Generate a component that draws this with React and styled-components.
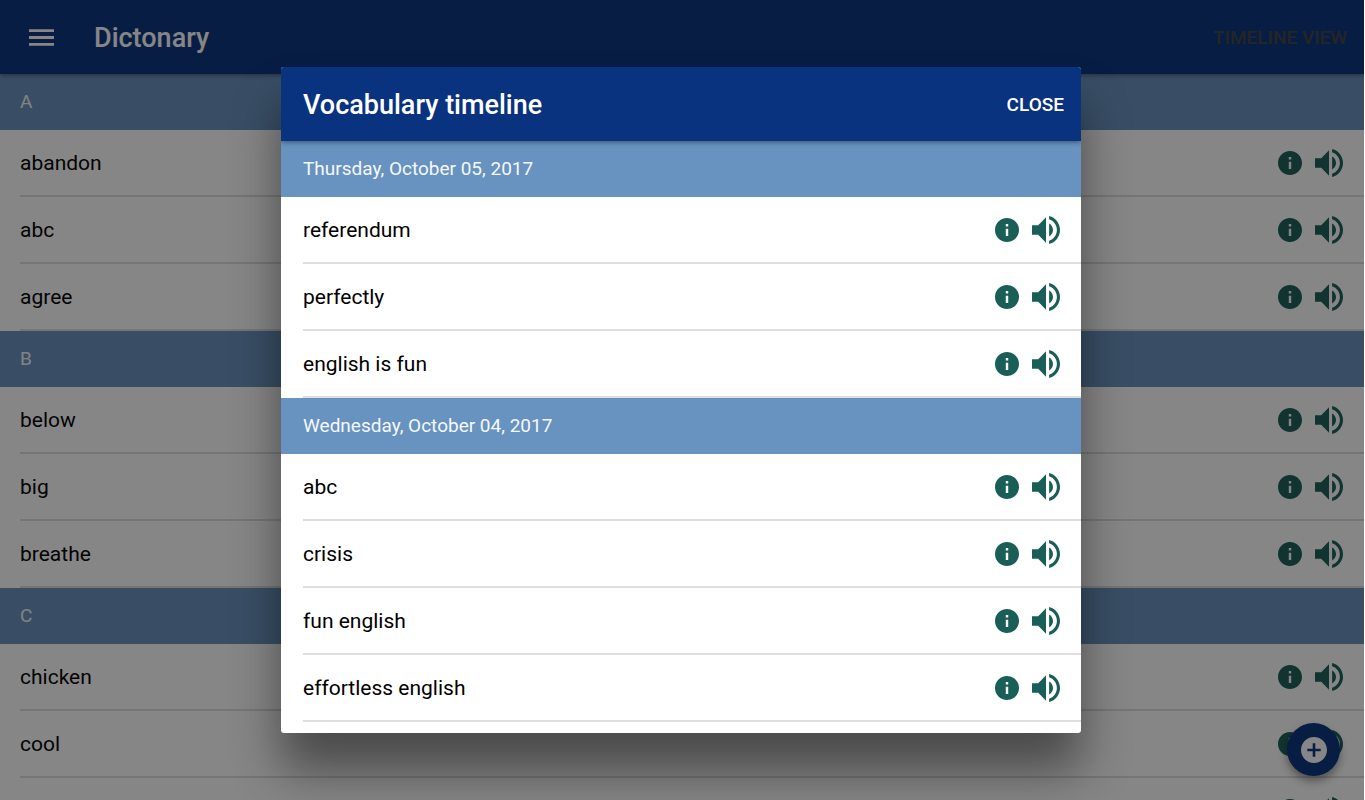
import React from "react";
import styled, { createGlobalStyle } from "styled-components";

const GlobalStyle = createGlobalStyle`
  *, *::before, *::after { box-sizing: border-box; }
  html, body, #root { height: 100%; }
  body { margin: 0; background: #fff; overflow: hidden; font-family: Roboto, "Liberation Sans", sans-serif; color: #000; }
  button { font: inherit; border: 0; padding: 0; background: none; cursor: pointer; }
  h1, h2, h3, ul { margin: 0; padding: 0; font-weight: 400; }
  svg { display: block; fill: currentColor; }
`;

const Shell = styled.div`
  --inset: 20px;
  position: relative;
  height: 100%;
  margin-right: 1px;
  overflow: hidden;
`;

const Toolbar = styled.header`
  position: relative;
  display: flex;
  align-items: center;
  height: 74px;
  padding: 1px 17px 0 ${(p) => (p.$menu ? "29px" : "var(--inset)")};
  background: #09327f;
  color: #fff;
  box-shadow: 0 1px 5px rgba(0, 0, 0, 0.45);
`;

const MenuButton = styled.button`
  color: inherit;
  margin-right: 40px;
`;

const Title = styled.h1`
  flex: 1;
  font-size: 27px;
  line-height: 32px;
  font-weight: 500;
`;

const TextButton = styled.button`
  font-size: 19px;
  line-height: 24px;
  font-weight: 500;
  text-transform: uppercase;
  color: ${(p) => (p.$dark ? "#424242" : "#fff")};
`;

const SectionTitle = styled.h3`
  display: flex;
  align-items: center;
  height: 56px;
  padding: 0 21px 0 var(--inset);
  font-size: 19px;
  line-height: 24px;
  background: #6892bf;
  color: #f4f8fc;
`;

const WordList = styled.ul`
  list-style: none;
  background: #fff;
`;

const WordRow = styled.li`
  display: flex;
  align-items: center;
  height: 67px;
  margin-left: var(--inset);
  padding-right: 21px;
  border-bottom: 2px solid #dedede;
`;

const Word = styled.span`
  flex: 1;
  font-size: 21px;
  line-height: 28px;
`;

const IconButton = styled.button`
  color: #1a5f57;
  margin-left: ${(p) => (p.$spaced ? "13px" : "0")};
`;

const Fab = styled.button`
  position: absolute;
  right: 24px;
  bottom: 24px;
  display: grid;
  place-items: center;
  width: 53px;
  height: 53px;
  border-radius: 50%;
  background: #09327f;
  color: #fff;
  box-shadow: 0 5px 8px rgba(0, 0, 0, 0.4);
`;

const Backdrop = styled.div`
  position: absolute;
  inset: 0;
  display: flex;
  align-items: center;
  justify-content: center;
  padding-right: 2px;
  background: rgba(8, 8, 8, 0.49);
`;

const Dialog = styled.section`
  --inset: 22px;
  width: 800px;
  max-width: 100%;
  height: 666px;
  max-height: 100%;
  overflow: hidden;
  border-radius: 3px;
  background: #fff;
  box-shadow: 0 37px 48px rgba(0, 0, 0, 0.45);
`;

const MenuIcon = () => (
  <svg width="25" height="17" viewBox="64 128 384 256" aria-hidden="true">
    <path d="M64 384h384v-42.666H64V384zm0-106.666h384v-42.667H64v42.667zM64 128v42.665h384V128H64z" />
  </svg>
);

const InfoIcon = () => (
  <svg width="24" height="24" viewBox="48 48 416 416" aria-hidden="true">
    <path d="M256 48C141.2 48 48 141.2 48 256s93.2 208 208 208 208-93.2 208-208S370.8 48 256 48zm21 312h-42V235h42v125zm0-166h-42v-42h42v42z" />
  </svg>
);

const VolumeIcon = () => (
  <svg width="28" height="28" viewBox="64 64 384 384" aria-hidden="true">
    <path d="M64 192v128h85.334L256 431.543V80.458L149.334 192H64zm288 64c0-38.399-21.333-72.407-53.333-88.863v176.636C330.667 328.408 352 294.4 352 256zM298.667 64v44.978C360.531 127.632 405.334 186.882 405.334 256c0 69.119-44.803 128.369-106.667 147.022V448C384 428.254 448 349.257 448 256c0-93.256-64-172.254-149.333-192z" />
  </svg>
);

const AddIcon = () => (
  <svg width="26" height="26" viewBox="48 48 416 416" aria-hidden="true">
    <path d="M256 48C141.2 48 48 141.2 48 256s93.2 208 208 208 208-93.2 208-208S370.8 48 256 48zm107 229h-86v86h-42v-86h-86v-42h86v-86h42v86h86v42z" />
  </svg>
);

const letters = [
  { title: "A", words: ["abandon", "abc", "agree"] },
  { title: "B", words: ["below", "big", "breathe"] },
  { title: "C", words: ["chicken", "cool", "crisis"] },
];

const days = [
  { title: "Thursday, October 05, 2017", words: ["referendum", "perfectly", "english is fun"] },
  { title: "Wednesday, October 04, 2017", words: ["abc", "crisis", "fun english", "effortless english"] },
];

function WordSections({ sections }) {
  return sections.map(({ title, words }) => (
    <section key={title}>
      <SectionTitle>{title}</SectionTitle>
      <WordList>
        {words.map((word) => (
          <WordRow key={word}>
            <Word>{word}</Word>
            <IconButton aria-label={`About ${word}`}><InfoIcon /></IconButton>
            <IconButton $spaced aria-label={`Listen to ${word}`}><VolumeIcon /></IconButton>
          </WordRow>
        ))}
      </WordList>
    </section>
  ));
}

export default function App() {
  return (
    <>
      <GlobalStyle />
      <Shell>
        <Toolbar $menu>
          <MenuButton aria-label="Menu"><MenuIcon /></MenuButton>
          <Title>Dictonary</Title>
          <TextButton $dark>Timeline view</TextButton>
        </Toolbar>
        <main>
          <WordSections sections={letters} />
        </main>
        <Fab aria-label="Add word"><AddIcon /></Fab>
        <Backdrop>
          <Dialog role="dialog" aria-modal="true" aria-labelledby="timeline-title">
            <Toolbar>
              <Title as="h2" id="timeline-title">Vocabulary timeline</Title>
              <TextButton>Close</TextButton>
            </Toolbar>
            <WordSections sections={days} />
          </Dialog>
        </Backdrop>
      </Shell>
    </>
  );
}
